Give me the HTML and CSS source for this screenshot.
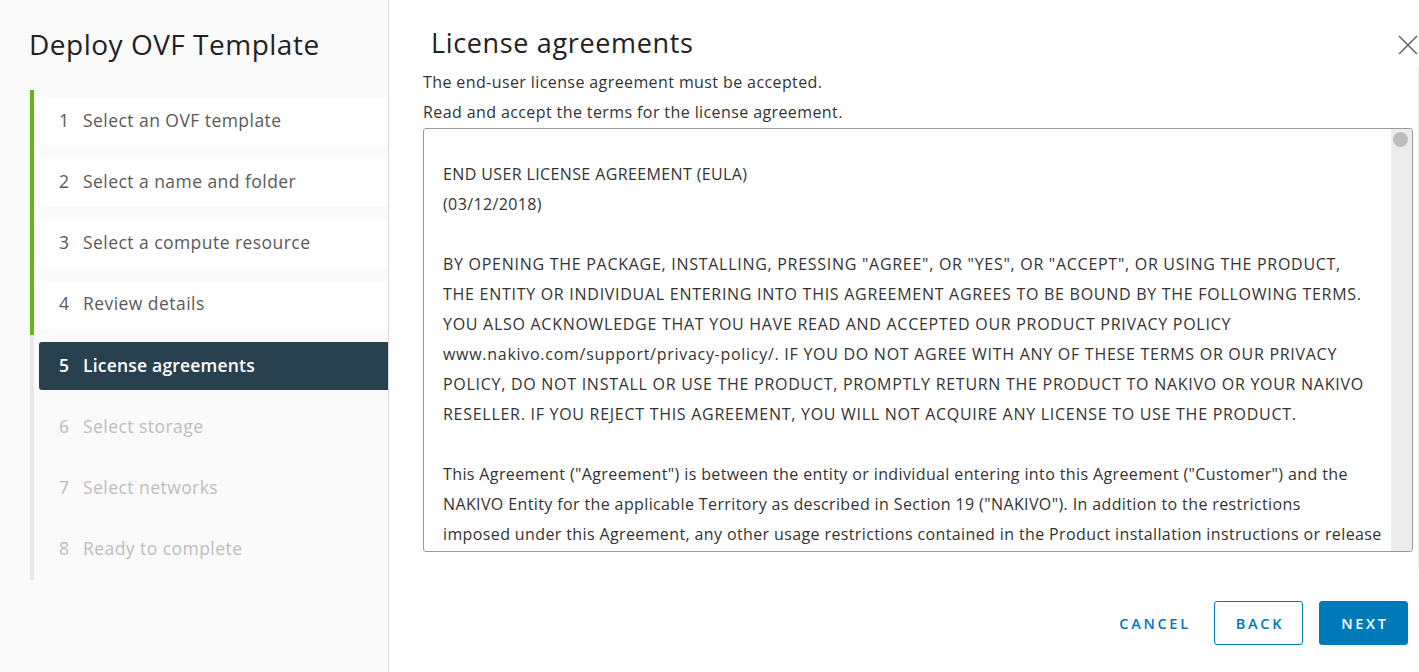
FILE: index.html
```html
<!DOCTYPE html>
<html lang="en">
<head>
<meta charset="utf-8">
<title>Deploy OVF Template</title>
<link rel="stylesheet" href="styles.css">
</head>
<body>
<div class="wizard">
  <aside class="sidebar">
    <h1 class="wiz-title">Deploy OVF Template</h1>
    <ol class="steps">
      <li class="step done"><div class="step-box"><span class="num">1</span><span class="label">Select an OVF template</span></div></li>
      <li class="step done"><div class="step-box"><span class="num">2</span><span class="label">Select a name and folder</span></div></li>
      <li class="step done"><div class="step-box"><span class="num">3</span><span class="label">Select a compute resource</span></div></li>
      <li class="step done"><div class="step-box"><span class="num">4</span><span class="label">Review details</span></div></li>
      <li class="step active"><div class="step-box"><span class="num">5</span><span class="label">License agreements</span></div></li>
      <li class="step todo"><div class="step-box"><span class="num">6</span><span class="label">Select storage</span></div></li>
      <li class="step todo"><div class="step-box"><span class="num">7</span><span class="label">Select networks</span></div></li>
      <li class="step todo"><div class="step-box"><span class="num">8</span><span class="label">Ready to complete</span></div></li>
    </ol>
  </aside>
  <main class="content">
    <header class="page-head">
      <h2 class="page-title">License agreements</h2>
      <button class="close" aria-label="Close">
        <svg width="20" height="20" viewBox="0 0 20 20"><path d="M1 1 L19 19 M19 1 L1 19" stroke="#666" stroke-width="1.6" fill="none"/></svg>
      </button>
    </header>
    <section class="body">
      <p class="note">The end-user license agreement must be accepted.</p>
      <p class="note">Read and accept the terms for the license agreement.</p>
      <div class="eula">
        <div class="eula-text">
          <p>END USER LICENSE AGREEMENT (EULA)<br>(03/12/2018)</p>
          <p class="caps">BY OPENING THE PACKAGE, INSTALLING, PRESSING "AGREE", OR "YES", OR "ACCEPT", OR USING THE PRODUCT,<br>THE ENTITY OR INDIVIDUAL ENTERING INTO THIS AGREEMENT AGREES TO BE BOUND BY THE FOLLOWING TERMS.<br>YOU ALSO ACKNOWLEDGE THAT YOU HAVE READ AND ACCEPTED OUR PRODUCT PRIVACY POLICY<br>www.nakivo.com/support/privacy-policy/. IF YOU DO NOT AGREE WITH ANY OF THESE TERMS OR OUR PRIVACY<br>POLICY, DO NOT INSTALL OR USE THE PRODUCT, PROMPTLY RETURN THE PRODUCT TO NAKIVO OR YOUR NAKIVO<br>RESELLER. IF YOU REJECT THIS AGREEMENT, YOU WILL NOT ACQUIRE ANY LICENSE TO USE THE PRODUCT.</p>
          <p>This Agreement ("Agreement") is between the entity or individual entering into this Agreement ("Customer") and the<br>NAKIVO Entity for the applicable Territory as described in Section 19 ("NAKIVO"). In addition to the restrictions<br>imposed under this Agreement, any other usage restrictions contained in the Product installation instructions or release</p>
        </div>
        <div class="scrollbar"><span class="thumb"></span></div>
      </div>
    </section>
    <footer class="actions">
      <button class="btn btn-link">CANCEL</button>
      <button class="btn btn-outline">BACK</button>
      <button class="btn btn-primary">NEXT</button>
    </footer>
  </main>
</div>
</body>
</html>
```
FILE: styles.css
```css
* { box-sizing: border-box; }
html, body { margin: 0; padding: 0; height: 100%; }
body {
  font-family: "Open Sans", "Liberation Sans", sans-serif;
  color: #333;
  background: #fff;
  overflow: hidden;
}
.wizard {
  display: flex;
  height: 672px;
}
.sidebar {
  width: 389px;
  flex: 0 0 389px;
  background: #fafafa;
  border-right: 1px solid #dcdcdc;
  padding-top: 23px;
}
.wiz-title {
  margin: 0 0 0 29px;
  font-size: 28px;
  letter-spacing: 0.5px;
  font-weight: 400;
  line-height: 42px;
  color: #222;
  height: 67px;
}
.steps {
  list-style: none;
  margin: 0 0 0 30px;
  padding: 0;
}
.step {
  border-left: 4px solid #e8e8e8;
  padding: 7px 0 6.25px 5px;
  height: 61.25px;
}
.step.done { border-left-color: #62b516; }
.step-box {
  height: 48px;
  display: flex;
  align-items: center;
  padding: 0 0 3px 20px;
  border-radius: 3px 0 0 3px;
  font-size: 17.5px;
  letter-spacing: 0.45px;
  color: #5a5a5a;
}
.step.done .step-box { background: #fff; }
.step.active .step-box { background: #29414e; color: #fff; font-weight: 600; letter-spacing: 0.2px; }
.step.todo .step-box { color: #bdbdbd; }
.num { width: 24px; flex: 0 0 24px; letter-spacing: 0; }

.content {
  flex: 1;
  padding: 22px 0 0 34px;
  display: flex;
  flex-direction: column;
}
.page-head {
  height: 45px;
  padding: 1px 6px 0 0;
  display: flex;
  align-items: flex-start;
  justify-content: space-between;
}
.page-title {
  margin: 0 0 0 8px;
  font-size: 27px;
  letter-spacing: 0.65px;
  font-weight: 400;
  line-height: 40px;
  color: #222;
}
.close {
  border: 0;
  background: none;
  padding: 0;
  margin: 12px -5px 0 0;
  width: 20px;
  height: 20px;
}
.body {
  padding: 0 5px 18px 0;
  border-right: 1px solid #efefef;
}
.note {
  margin: 0;
  font-size: 16px;
  letter-spacing: 0.4px;
  line-height: 30px;
  color: #333;
}
.eula {
  margin-top: 1px;
  height: 424px;
  border: 1px solid #9a9a9a;
  border-radius: 3px;
  display: flex;
  overflow: hidden;
}
.eula-text {
  flex: 1;
  padding: 30px 0 0 19px;
  font-size: 16px;
  letter-spacing: 0.38px;
  line-height: 30px;
  color: #333;
  white-space: nowrap;
  overflow: hidden;
}
.eula-text p { margin: 0 0 30px; }
.eula-text .caps { letter-spacing: 0.72px; }
.scrollbar {
  width: 21px;
  flex: 0 0 21px;
  background: #ececec;
  padding: 3px 0 0 2px;
}
.thumb {
  display: block;
  width: 15px;
  height: 15px;
  border-radius: 50%;
  background: #bdbdbd;
}
.actions {
  display: flex;
  justify-content: flex-end;
  gap: 16px;
  margin-top: 31px;
  padding-right: 11px;
}
.btn {
  width: 89px;
  height: 44px;
  border-radius: 3px;
  font-family: inherit;
  font-size: 14.5px;
  font-weight: 600;
  letter-spacing: 2.7px;
  padding: 0 0 0 3px;
  cursor: pointer;
}
.btn-link { border: 0; background: none; color: #0079b8; }
.btn-outline { border: 1px solid #0079b8; background: #fff; color: #0079b8; }
.btn-primary { border: 1px solid #0079b8; background: #0079b8; color: #fff; }
```
